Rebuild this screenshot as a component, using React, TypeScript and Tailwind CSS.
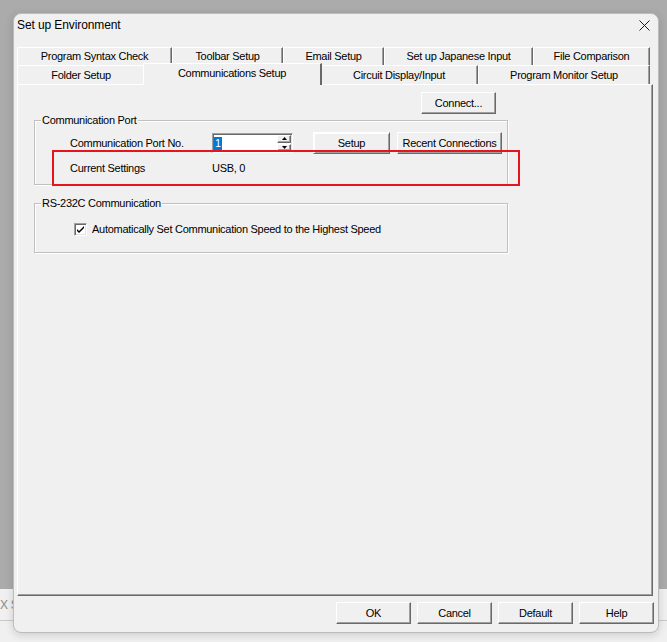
import type { ReactNode } from "react";

const raised =
  "border border-t-white border-l-white border-r-[#696969] border-b-[#696969] shadow-[inset_-1px_-1px_0_#a0a0a0]";
const sunken =
  "border border-t-[#a0a0a0] border-l-[#a0a0a0] border-r-white border-b-white shadow-[inset_1px_1px_0_#696969,inset_-1px_-1px_0_#e3e3e3]";

function Btn({ children, className = "" }: { children: ReactNode; className?: string }) {
  return (
    <button
      type="button"
      className={`flex h-[22px] shrink-0 items-center justify-center bg-[#f0f0f0] ${raised} ${className}`}
    >
      {children}
    </button>
  );
}

function Tab({ label, w, selected = false }: { label: string; w: string; selected?: boolean }) {
  if (selected) {
    return (
      <div
        className={`relative z-10 -mx-[2px] -mt-[2px] -mb-px flex h-[22px] shrink-0 items-start justify-center border-t border-l border-t-white border-l-white border-r-2 border-r-[#696969] bg-[#f0f0f0] pt-[3px] ${w}`}
      >
        {label}
      </div>
    );
  }
  return (
    <div
      className={`flex h-full shrink-0 items-center justify-center border-t border-l border-t-white border-l-white border-r border-r-[#696969] bg-[#f0f0f0] shadow-[inset_-1px_0_0_#a0a0a0] ${w}`}
    >
      {label}
    </div>
  );
}

function Group({
  label,
  className = "",
  children,
}: {
  label: string;
  className?: string;
  children?: ReactNode;
}) {
  return (
    <div
      className={`relative ml-[16px] w-[474px] border border-[#c0c0c0] shadow-[inset_1px_1px_0_#fff,1px_1px_0_#fff] ${className}`}
    >
      <span className="absolute -top-[7px] left-[6px] bg-[#f0f0f0] px-[1px]">{label}</span>
      {children}
    </div>
  );
}

function Spinner() {
  return (
    <div className={`flex h-[20px] w-[81px] shrink-0 items-center bg-white ${sunken}`}>
      <span className="ml-[1px] bg-[#0078d7] px-[1px] leading-[13px] text-white">1</span>
      <div className="mr-[1px] ml-auto flex h-full flex-col justify-center gap-[1px] py-[1px]">
        <div className={`flex h-[8px] w-[14px] items-center justify-center bg-[#f0f0f0] ${raised}`}>
          <svg width="5" height="3" viewBox="0 0 5 3">
            <path d="M2.5 0 L5 3 L0 3 Z" fill="#000" />
          </svg>
        </div>
        <div className={`flex h-[8px] w-[14px] items-center justify-center bg-[#f0f0f0] ${raised}`}>
          <svg width="5" height="3" viewBox="0 0 5 3">
            <path d="M0 0 L5 0 L2.5 3 Z" fill="#000" />
          </svg>
        </div>
      </div>
    </div>
  );
}

function Dialog() {
  return (
    <div className="absolute top-[13px] left-[13px] flex h-[620px] w-[646px] flex-col rounded-[8px] border border-[#bcbcbc] bg-[#f0f0f0] shadow-[0_2px_8px_rgba(0,0,0,0.15)]">
      {/* title bar */}
      <div className="flex h-[23px] items-center justify-between pr-[8px] pl-[3px] text-[12px] tracking-[-0.1px]">
        <span>Set up Environment</span>
        <svg width="11" height="11" viewBox="0 0 11 11">
          <path d="M0.5 0.5 L10.5 10.5 M10.5 0.5 L0.5 10.5" stroke="#1a1a1a" strokeWidth="1" />
        </svg>
      </div>

      {/* tabs */}
      <div className="mt-[10px] ml-[3px] w-[636px]">
        <div className="flex h-[18px]">
          <Tab label="Program Syntax Check" w="w-[155px]" />
          <Tab label="Toolbar Setup" w="w-[111px]" />
          <Tab label="Email Setup" w="w-[101px]" />
          <Tab label="Set up Japanese Input" w="w-[149px]" />
          <Tab label="File Comparison" w="w-[117px]" />
        </div>
        <div className="flex h-[19px] items-end">
          <Tab label="Folder Setup" w="w-[128px]" />
          <Tab label="Communications Setup" w="w-[179px]" selected />
          <Tab label="Circuit Display/Input" w="w-[158px]" />
          <Tab label="Program Monitor Setup" w="w-[172px]" />
        </div>

        {/* panel */}
        <div className={`h-[512px] ${raised}`}>
          <div className="mt-[7px] ml-[403px] flex">
            <Btn className="w-[75px]">Connect...</Btn>
          </div>

          <Group label="Communication Port" className="mt-[6px] h-[65px]">
            <div className="mt-[11px] flex h-[22px] items-center pl-[35px]">
              <span className="w-[142px] shrink-0">Communication Port No.</span>
              <Spinner />
              <Btn className="ml-[20px] w-[77px] border-[#5a5a5a] shadow-[inset_1px_1px_0_#fff,inset_-1px_-1px_0_#a0a0a0]">
                Setup
              </Btn>
              <Btn className="ml-[7px] w-[105px]">Recent Connections</Btn>
            </div>
            <div className="mt-[8px] flex pl-[35px]">
              <span className="w-[142px] shrink-0">Current Settings</span>
              <span>USB, 0</span>
            </div>
            <div className="absolute top-[29px] left-[17px] h-[36px] w-[468px] border-2 border-[#e8141c]" />
          </Group>

          <Group label="RS-232C Communication" className="mt-[18px] h-[50px]">
            <div className="mt-[19px] flex items-center pl-[39px]">
              <div className={`flex h-[13px] w-[13px] shrink-0 items-center justify-center bg-white ${sunken}`}>
                <svg width="7" height="7" viewBox="0 0 7 7">
                  <path d="M0 3 L0 5 L2 7 L7 2 L7 0 L2 5 Z" fill="#000" />
                </svg>
              </div>
              <span className="ml-[5px]">Automatically Set Communication Speed to the Highest Speed</span>
            </div>
          </Group>
        </div>
      </div>

      {/* bottom buttons */}
      <div className="mt-[6px] flex justify-end gap-[6px] pr-[4px]">
        <Btn className="w-[75px]">OK</Btn>
        <Btn className="w-[75px]">Cancel</Btn>
        <Btn className="w-[75px]">Default</Btn>
        <Btn className="w-[75px]">Help</Btn>
      </div>
    </div>
  );
}

export default function App() {
  return (
    <div className="relative h-[642px] w-[667px] overflow-hidden bg-[#f0f0f0] font-['Liberation_Sans',Arial,sans-serif] text-[11px] leading-[13px] tracking-[-0.28px] text-black">
      <div className="h-[589px] bg-[#ababab]" />
      <div className="h-[32px] border-b border-[#c8c8c8] pt-[10px] text-[12px] text-[#8a8a8a]">X S</div>
      <Dialog />
    </div>
  );
}
